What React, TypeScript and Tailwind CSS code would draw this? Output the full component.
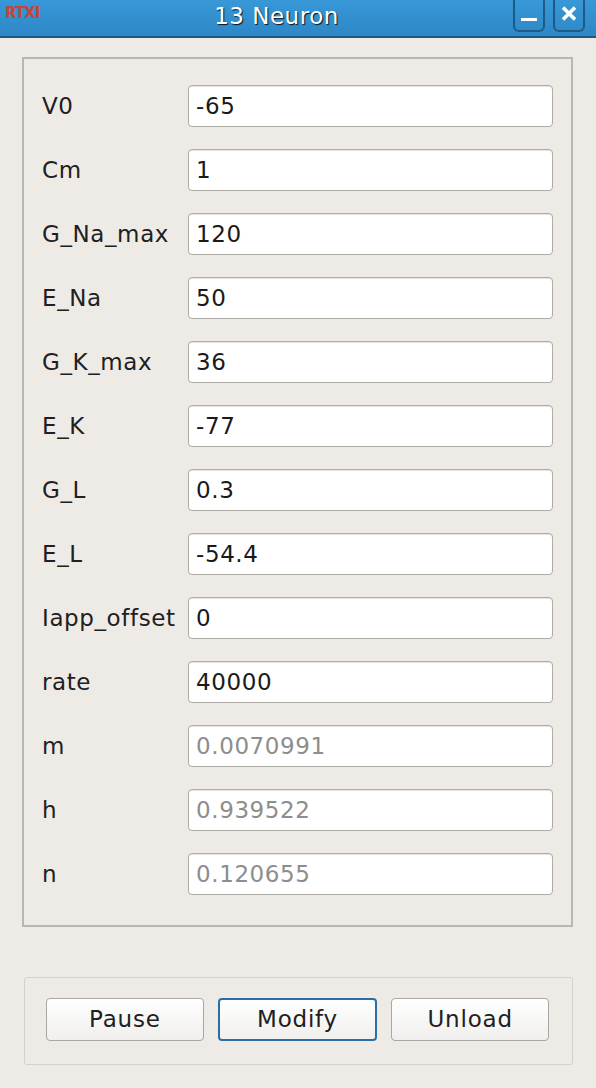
import React from "react";

const rows: { label: string; value: string; ro?: boolean }[] = [
  { label: "V0", value: "-65" },
  { label: "Cm", value: "1" },
  { label: "G_Na_max", value: "120" },
  { label: "E_Na", value: "50" },
  { label: "G_K_max", value: "36" },
  { label: "E_K", value: "-77" },
  { label: "G_L", value: "0.3" },
  { label: "E_L", value: "-54.4" },
  { label: "Iapp_offset", value: "0" },
  { label: "rate", value: "40000" },
  { label: "m", value: "0.0070991", ro: true },
  { label: "h", value: "0.939522", ro: true },
  { label: "n", value: "0.120655", ro: true },
];

export default function App() {
  return (
    <div
      className="w-[596px] h-[1088px] bg-[#eeebe7] flex flex-col overflow-hidden"
      style={{ fontFamily: '"DejaVu Sans", "Noto Sans", sans-serif' }}
    >
      {/* Title bar */}
      <div className="h-[38px] shrink-0 flex bg-gradient-to-b from-[#3898d8] to-[#2e87c6] border-b-2 border-[#1d5a80]">
        <div className="w-[48px] flex items-start pl-[5px] pt-[4px]">
          <span className="text-[15px] font-bold tracking-[-1px] text-[#c6443a] leading-[18px]">RTXI</span>
        </div>
        <div className="flex-1 flex justify-center items-start pt-[1px]">
          <span className="text-[23px] tracking-[0.5px] text-white leading-[30px] [text-shadow:1px_1px_1px_rgba(0,0,0,0.85)]">
            13 Neuron
          </span>
        </div>
        <div className="w-[91px] flex items-start gap-[8px] pl-[8px]">
          <div className="w-[32px] h-[32px] border-2 border-t-0 border-[#1d5a86] rounded-b-[6px] flex items-end justify-center pb-[9px]">
            <div className="w-[16px] h-[3px] bg-white" />
          </div>
          <div className="w-[32px] h-[32px] border-2 border-t-0 border-[#1d5a86] rounded-b-[6px] flex items-start justify-center pt-[6px]">
            <svg width="16" height="15" viewBox="0 0 16 15">
              <path d="M2 1.5 L14 13.5 M14 1.5 L2 13.5" stroke="white" strokeWidth="3.6" strokeLinecap="butt" />
            </svg>
          </div>
        </div>
      </div>

      {/* Parameter panel */}
      <div className="px-[22px] pt-[19px] pr-[23px]">
        <div className="h-[870px] border-2 border-[#bab6b0] pt-[26px] pl-[18px] pr-[18px] flex flex-col gap-[22px]">
          {rows.map((r) => (
            <div key={r.label} className="flex items-center h-[42px]">
              <div className="w-[146px] text-[23px] tracking-[0.6px] text-[#202020]">{r.label}</div>
              <div className="flex-1 h-[42px] bg-white border border-[#afaba5] rounded-[4px] shadow-[inset_0_1px_0_#e6e6e6] flex items-center pl-[7px]">
                <span className={`text-[23px] tracking-[0.6px] ${r.ro ? "text-[#8d8d8d]" : "text-[#1a1a1a]"}`}>{r.value}</span>
              </div>
            </div>
          ))}
        </div>
      </div>

      {/* Buttons */}
      <div className="pl-[24px] pr-[23px] pt-[50px]">
        <div className="h-[88px] border border-[#d4d0ca] rounded-[3px] pt-[20px] pl-[21px] pr-[23px] flex gap-[14px]">
          <button className="flex-1 h-[43px] bg-gradient-to-b from-white to-[#f0efed] border border-[#aaa7a2] rounded-[4px] text-[23px] tracking-[0.8px] text-[#202020]">
            Pause
          </button>
          <button className="flex-1 h-[43px] bg-gradient-to-b from-white to-[#f0efed] border-2 border-[#2b6ea3] rounded-[4px] text-[23px] tracking-[0.8px] text-[#202020]">
            Modify
          </button>
          <button className="flex-1 h-[43px] bg-gradient-to-b from-white to-[#f0efed] border border-[#aaa7a2] rounded-[4px] text-[23px] tracking-[0.8px] text-[#202020]">
            Unload
          </button>
        </div>
      </div>
    </div>
  );
}
